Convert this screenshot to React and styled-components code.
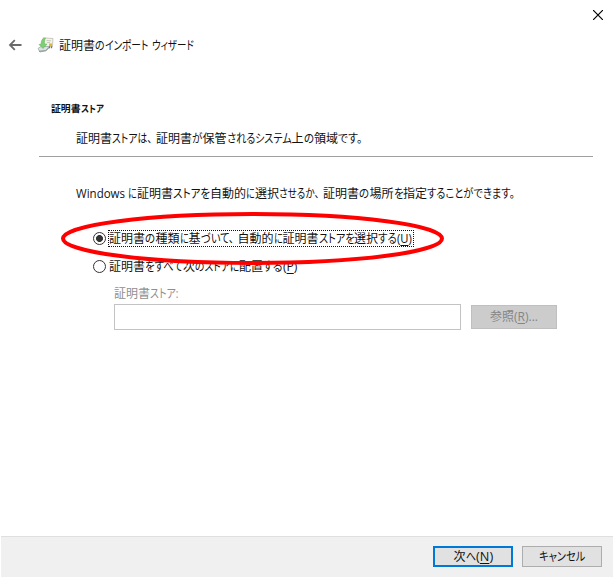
import React, { useLayoutEffect, useRef, useState } from "react";
import styled, { createGlobalStyle, css } from "styled-components";

const GlobalStyle = createGlobalStyle`
  * {
    box-sizing: border-box;
  }
  body {
    margin: 0;
    background-color: #fff;
    font-family: "Open Sans", "Noto Sans CJK JP", sans-serif;
    font-size: 12px;
    color: #111;
  }
`;

const Window = styled.div`
  width: 614px;
  height: 578px;
  padding: 0 1px 1px;
  display: flex;
  flex-direction: column;
  background-color: #fff;
  overflow: hidden;
`;
const TitleBar = styled.div`
  height: 30px;
  display: flex;
  justify-content: flex-end;
  padding: 10px 10px 0 0;
`;
const Header = styled.div`
  height: 30px;
  display: flex;
  align-items: center;
  padding-left: 7px;
`;
const HeaderIcon = styled.div`
  display: flex;
  margin: 0 5px 0 14px;
`;
const HeaderTitle = styled.div`
  padding-top: 2px;
`;
const Content = styled.div`
  flex: 1;
  display: flex;
  flex-direction: column;
`;
const Heading = styled.div`
  padding: 41px 0 0 50px;
  height: 71px;
  font-size: 9.5px;
  font-weight: 700;
`;
const Description = styled.div`
  margin: 0 20px 0 38px;
  padding-left: 37px;
  height: 26px;
  border-bottom: 1px solid #a0a0a0;
`;
const Intro = styled.div`
  padding: 29px 0 0 75px;
  height: 73px;
`;
const Options = styled.div`
  position: relative;
  padding-left: 92px;
`;
const Option = styled.div`
  height: 28px;
  display: flex;
  align-items: flex-start;
`;
const Radio = styled.span`
  width: 13px;
  height: 13px;
  margin: 2px 2px 0 0;
  border: 1px solid #333;
  border-radius: 50%;
  background-color: #fff;
  ${({ $checked }) =>
    $checked &&
    css`
      background-image: radial-gradient(circle, #333 3.1px, transparent 3.8px);
    `}
`;
const OptionText = styled.span`
  height: 17px;
  padding-right: 1px;
  border: 1px dotted ${({ $focused }) => ($focused ? "#111" : "transparent")};
  display: flex;
  align-items: center;
`;
const Marker = styled.svg`
  position: absolute;
  left: 58px;
  top: -20px;
`;
const Store = styled.div`
  padding-left: 113px;
`;
const StoreRow = styled.div`
  display: flex;
  align-items: center;
  gap: 10px;
`;
const StoreLabel = styled.div`
  height: 18px;
  color: #8f8f8f;
`;
const Input = styled.input`
  width: 347px;
  height: 26px;
  border: 1px solid #c3c3c3;
  background-color: #fff;
  outline: none;
`;
const Button = styled.button`
  width: ${({ $width }) => $width || 80}px;
  height: ${({ $height }) => $height || 21}px;
  padding: 0;
  display: flex;
  align-items: center;
  justify-content: center;
  font: inherit;
  color: #111;
  background-color: #e1e1e1;
  border: 1px solid #adadad;
  ${({ $primary }) => $primary && "border: 2px solid #0078d7;"}
  &:disabled {
    color: #858585;
    background-color: #ccc;
    border-color: #bfbfbf;
  }
`;
const Footer = styled.div`
  height: 41px;
  padding: 9px 11px 0 0;
  display: flex;
  justify-content: flex-end;
  gap: 9px;
  background-color: #f0f0f0;
  border-top: 1px solid #dfdfdf;
`;

const Line = styled.span`
  display: flex;
  height: 16px;
  line-height: 16px;
  white-space: pre;
`;
const Slot = styled.span`
  flex: none;
  width: ${({ $width }) => $width}px;
`;
const Glyphs = styled.span`
  display: inline-block;
  transform-origin: 0 50%;
  font-feature-settings: "palt";
`;
const Key = styled.span`
  text-decoration: underline;
  text-underline-offset: 2px;
  text-decoration-thickness: 1px;
`;

// condenses a run of characters to the given width, like a UI font does with kana
const Run = ({ width, children }) => {
  const ref = useRef(null);
  const [scale, setScale] = useState(1);

  useLayoutEffect(() => {
    setScale(width / ref.current.offsetWidth);
  }, [width]);

  return (
    <Slot $width={width}>
      <Glyphs ref={ref} style={{ transform: `scaleX(${scale})` }}>{children}</Glyphs>
    </Slot>
  );
};

const Text = ({ runs }) => (
  <Line>
    {runs.map(([text, width, key], i) => (
      <Run key={i} width={width}>
        {key ? <>(<Key>{key}</Key>){text}</> : text}
      </Run>
    ))}
  </Line>
);

const title = [["証明書", 36], ["の", 10], ["インポート", 43.5], [" ", 3], ["ウィザード", 42]];
const heading = [["証明書", 30], ["ストア", 23]];
const description = [
  ["証明書", 36], ["ストアは、", 40], [" ", 4], ["証明書", 36], ["が", 10.5], ["保管", 24],
  ["される", 28], ["システム", 37], ["上", 12], ["の", 10.5], ["領域", 24], ["です。", 24.5],
];
const intro = [
  ["Windows", 49], [" ", 3], ["に", 9], ["証明書", 36], ["ストアを", 37], ["自動的", 36], ["に", 9],
  ["選択", 24], ["させるか、", 40], [" ", 4], ["証明書", 36], ["の", 10.5], ["場所", 24],
  ["を", 9.5], ["指定", 24], ["することができます。", 88],
];
const autoOption = [
  ["証明書", 36], ["の", 10.5], ["種類", 24], ["に", 9], ["基", 12], ["づいて、", 33], [" ", 4],
  ["自動的", 36], ["に", 9], ["証明書", 36], ["ストアを", 35.5], ["選択", 24], ["する", 19],
  ["", 15, "U"],
];
const manualOption = [
  ["証明書", 36], ["をすべて", 38], ["次", 12], ["のストアに", 44], ["配置", 24], ["する", 20], ["", 14, "P"],
];

const BackIcon = () => (
  <svg width="15" height="12" viewBox="0 0 15 12" fill="none" stroke="#6a6a6a" strokeWidth="1.8">
    <path d="M13.500 6H2M6.800 1.200L2 6l4.800 4.800" />
  </svg>
);

const CertificateIcon = () => (
  <svg width="17" height="16" viewBox="0 0 17 16">
    <path d="M6 .8l10 .7-.6 8.500-9-.5z" fill="#f3f3ea" stroke="#bdbdb0" strokeWidth=".8" />
    <path d="M9.500 3.500l4.500.3M10 5.500h3" stroke="#c9c9bd" />
    <path d="M1 11.500l3-2h8l-2.500 4-6.500 1.500z" fill="#dce1e1" stroke="#a2abab" strokeWidth=".8" />
    <path d="M2 14.300l6.500-.6 3.500-3" fill="none" stroke="#87939a" />
    <path d="M8.500 1C5 1.500 4 4 4.200 7L2 7.500l4 4 4-4.500-2.300.2C7.200 5 7.500 3 8.500 1z" fill="#7fce72" stroke="#57b056" strokeWidth=".5" />
    <path d="M12 6.500h3v3h-3z" fill="#e3b730" />
    <path d="M12 9.300h1.100v2H12zM14 9.300h1.100v2H14z" fill="#5570c0" />
  </svg>
);

const App = () => {
  return (
    <>
      <GlobalStyle />
      <Window>
        <TitleBar>
          <svg width="10" height="10" viewBox="0 0 10 10" stroke="#000" strokeWidth="1.2">
            <path d="M0 0l10 10M10 0L0 10" />
          </svg>
        </TitleBar>
        <Header>
          <BackIcon />
          <HeaderIcon>
            <CertificateIcon />
          </HeaderIcon>
          <HeaderTitle>
            <Text runs={title} />
          </HeaderTitle>
        </Header>
        <Content>
          <Heading>
            <Text runs={heading} />
          </Heading>
          <Description>
            <Text runs={description} />
          </Description>
          <Intro>
            <Text runs={intro} />
          </Intro>
          <Options>
            <Option>
              <Radio $checked />
              <OptionText $focused>
                <Text runs={autoOption} />
              </OptionText>
            </Option>
            <Option>
              <Radio />
              <OptionText>
                <Text runs={manualOption} />
              </OptionText>
            </Option>
            <Marker width="390" height="58" fill="none" stroke="#f00" strokeWidth="4">
              <ellipse cx="193.500" cy="28.500" rx="189.500" ry="24.500" />
            </Marker>
          </Options>
          <Store>
            <StoreLabel>
              <Text runs={[["証明書", 36], ["ストア:", 28]]} />
            </StoreLabel>
            <StoreRow>
              <Input disabled />
              <Button disabled $width={86} $height={24}>
                <Text runs={[["参照", 24], ["...", 24, "R"]]} />
              </Button>
            </StoreRow>
          </Store>
        </Content>
        <Footer>
          <Button $primary>
            <Text runs={[["次", 12], ["へ", 10], ["", 17, "N"]]} />
          </Button>
          <Button>
            <Text runs={[["キャンセル", 46]]} />
          </Button>
        </Footer>
      </Window>
    </>
  );
};

export default App;
